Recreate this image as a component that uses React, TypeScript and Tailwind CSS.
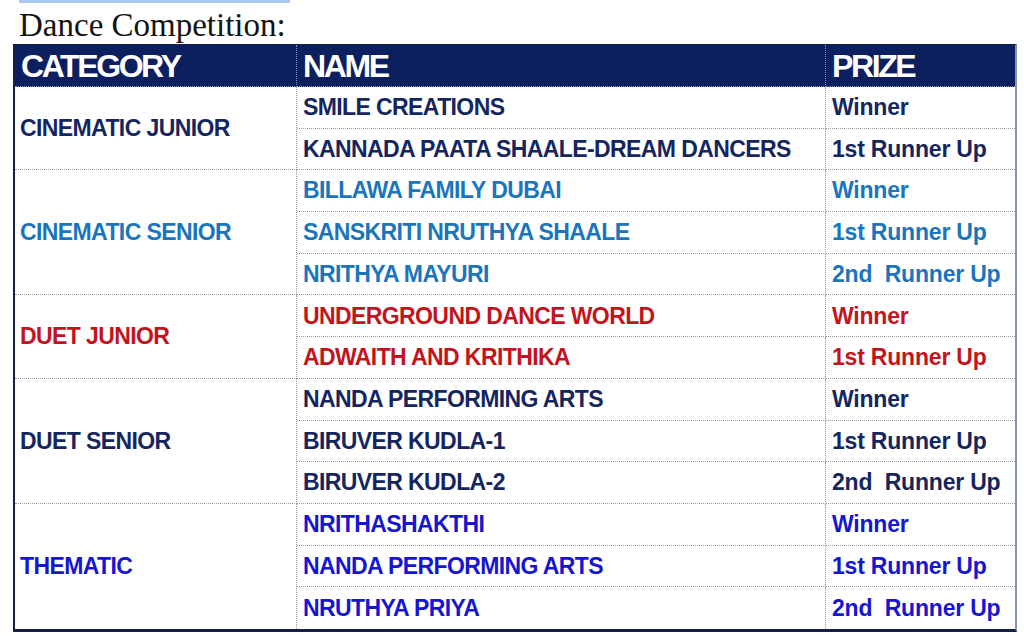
import React from 'react';

interface Entry {
  name: string;
  prize: string;
}

interface Group {
  category: string;
  color: string;
  entries: Entry[];
}

const groups: Group[] = [
  {
    category: 'CINEMATIC JUNIOR',
    color: 'text-[#15265f]',
    entries: [
      { name: 'SMILE CREATIONS', prize: 'Winner' },
      { name: 'KANNADA PAATA SHAALE-DREAM DANCERS', prize: '1st Runner Up' },
    ],
  },
  {
    category: 'CINEMATIC SENIOR',
    color: 'text-[#1a75bd]',
    entries: [
      { name: 'BILLAWA FAMILY DUBAI', prize: 'Winner' },
      { name: 'SANSKRITI NRUTHYA SHAALE', prize: '1st Runner Up' },
      { name: 'NRITHYA MAYURI', prize: '2nd  Runner Up' },
    ],
  },
  {
    category: 'DUET JUNIOR',
    color: 'text-[#c3141d]',
    entries: [
      { name: 'UNDERGROUND DANCE WORLD', prize: 'Winner' },
      { name: 'ADWAITH AND KRITHIKA', prize: '1st Runner Up' },
    ],
  },
  {
    category: 'DUET SENIOR',
    color: 'text-[#15265f]',
    entries: [
      { name: 'NANDA PERFORMING ARTS', prize: 'Winner' },
      { name: 'BIRUVER KUDLA-1', prize: '1st Runner Up' },
      { name: 'BIRUVER KUDLA-2', prize: '2nd  Runner Up' },
    ],
  },
  {
    category: 'THEMATIC',
    color: 'text-[#1515d2]',
    entries: [
      { name: 'NRITHASHAKTHI', prize: 'Winner' },
      { name: 'NANDA PERFORMING ARTS', prize: '1st Runner Up' },
      { name: 'NRUTHYA PRIYA', prize: '2nd  Runner Up' },
    ],
  },
];

export default function App() {
  let row = 2;
  const cells: React.ReactNode[] = [];
  groups.forEach((g, gi) => {
    const start = row;
    const last = gi === groups.length - 1;
    cells.push(
      <div
        key={`c-${gi}`}
        style={{ gridRow: `${start} / span ${g.entries.length}`, gridColumn: '1' }}
        className={`flex items-center pl-[5px] border-r border-dotted border-[#9a9a9a] ${last ? '' : 'border-b'} text-[23px] font-bold tracking-[-0.6px] ${g.color}`}
      >
        {g.category}
      </div>
    );
    g.entries.forEach((e, ei) => {
      const bottom = last && ei === g.entries.length - 1 ? '' : 'border-b';
      cells.push(
        <div
          key={`n-${gi}-${ei}`}
          style={{ gridRow: `${row}`, gridColumn: '2' }}
          className={`flex items-center pl-[6px] border-r border-dotted border-[#9a9a9a] ${bottom} text-[23px] font-bold tracking-[-0.6px] whitespace-nowrap ${g.color}`}
        >
          {e.name}
        </div>
      );
      cells.push(
        <div
          key={`p-${gi}-${ei}`}
          style={{ gridRow: `${row}`, gridColumn: '3' }}
          className={`flex items-center pl-[6px] border-dotted border-[#9a9a9a] ${bottom} text-[23px] font-bold tracking-[-0.2px] whitespace-pre ${g.color}`}
        >
          {e.prize}
        </div>
      );
      row++;
    });
  });

  return (
    <div className="w-[1024px] h-[636px] bg-white overflow-hidden font-['Liberation_Sans',Arial,sans-serif]">
      <div className="ml-[19px] w-[271px] h-[3px] bg-[#abc9ee]" />
      <div className="pl-[19px] h-[41px] pt-[3px] leading-[38px] text-[33px] text-[#141414] font-['Liberation_Serif','Times_New_Roman',serif]">
        Dance Competition:
      </div>

      {/* Results table */}
      <div className="ml-[13px] w-[1004px] h-[588px] border-l-[2px] border-b-[3px] border-r-[2px] border-t border-l-[#15204a] border-b-[#15204a] border-t-[#15204a] border-r-[#8596ad] grid grid-cols-[282px_529px_1fr] grid-rows-[42px_repeat(13,minmax(0,1fr))]">
        <div className="flex items-center pl-[6px] bg-[#0c1f5f] text-white text-[32px] font-bold tracking-[-2.4px] border-r border-b border-dotted border-[#8a93b0]">
          CATEGORY
        </div>
        <div className="flex items-center pl-[6px] bg-[#0c1f5f] text-white text-[32px] font-bold tracking-[-2.4px] border-r border-b border-dotted border-[#8a93b0]">
          NAME
        </div>
        <div className="flex items-center pl-[6px] bg-[#0c1f5f] text-white text-[32px] font-bold tracking-[-2.4px] border-b border-dotted border-[#8a93b0]">
          PRIZE
        </div>
        {cells}
      </div>
    </div>
  );
}
